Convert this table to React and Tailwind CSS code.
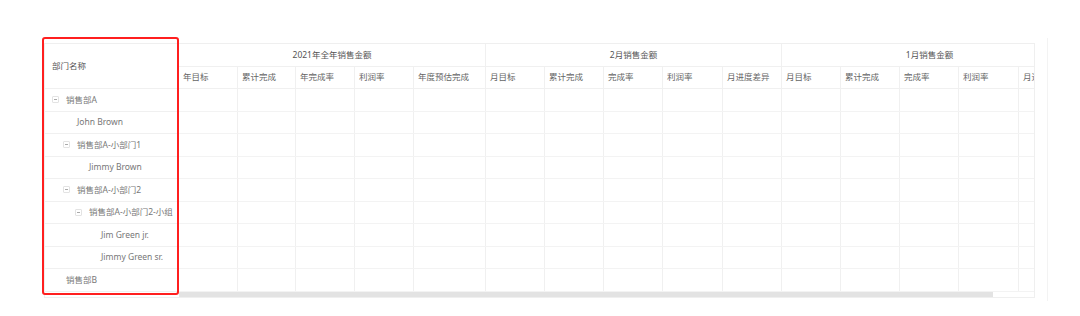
import React from 'react';

const groups = [
    {
        title: '2021年全年销售金额',
        width: 'w-[307px]',
        cols: [
            ['年目标', 'w-[59px]'],
            ['累计完成', 'w-[58px]'],
            ['年完成率', 'w-[59px]'],
            ['利润率', 'w-[59px]'],
            ['年度预估完成', 'w-[72px]'],
        ],
    },
    {
        title: '2月销售金额',
        width: 'w-[296px]',
        cols: [
            ['月目标', 'w-[59px]'],
            ['累计完成', 'w-[59px]'],
            ['完成率', 'w-[59px]'],
            ['利润率', 'w-[60px]'],
            ['月进度差异', 'w-[59px]'],
        ],
    },
    {
        title: '1月销售金额',
        width: 'w-[296px]',
        cols: [
            ['月目标', 'w-[59px]'],
            ['累计完成', 'w-[59px]'],
            ['完成率', 'w-[59px]'],
            ['利润率', 'w-[60px]'],
            ['月进度差异', 'w-[59px]'],
        ],
    },
];

// name, indent class, has children
const rows = [
    ['销售部A', 'pl-[7px]', true],
    ['John Brown', 'pl-[32px]', false],
    ['销售部A-小部门1', 'pl-[18px]', true],
    ['Jimmy Brown', 'pl-[44px]', false],
    ['销售部A-小部门2', 'pl-[18px]', true],
    ['销售部A-小部门2-小组', 'pl-[30px]', true],
    ['Jim Green jr.', 'pl-[56px]', false],
    ['Jimmy Green sr.', 'pl-[56px]', false],
    ['销售部B', 'pl-[21px]', false],
];

const allCols = groups.flatMap((g) => g.cols);

const Toggle = () => (
    <span className="w-[7px] h-[7px] mr-[7px] border border-[#e3e3e3] rounded-[1px] bg-white flex items-center justify-center shrink-0">
        <span className="w-[3px] h-px bg-[#aaa]" />
    </span>
);

const App = () => {
    return (
        <div className="w-[1080px] h-[316px] bg-white relative font-['Noto_Sans','Noto_Sans_CJK_SC',sans-serif] text-[8.5px] leading-none">
            <div className="pt-[38px] pl-[44px]">
                <div className="w-[1004px] h-[263px] border-r border-[#f3f3f3] pt-[5px]">
                    <div className="w-[991px] border border-[#efefef] flex">
                        {/* fixed column */}
                        <div className="w-[134px] shrink-0">
                            <div className="h-[45px] border-b border-[#f0f0f0] flex items-center pl-[7px] text-[#555]">
                                部门名称
                            </div>
                            {rows.map(([name, indent, kids]) => (
                                <div
                                    key={name}
                                    className={`h-[22.5px] border-b border-[#f0f0f0] flex items-center text-[#777] ${indent}`}
                                >
                                    {kids && <Toggle />}
                                    <span className="whitespace-nowrap">{name}</span>
                                </div>
                            ))}
                        </div>

                        {/* scrolling part */}
                        <div className="flex-1 overflow-hidden">
                            <div className="w-[899px]">
                                <div className="flex h-[23px] border-b border-[#f0f0f0]">
                                    {groups.map((g) => (
                                        <div
                                            key={g.title}
                                            className={`${g.width} shrink-0 border-r border-[#f0f0f0] flex items-center justify-center text-[#555]`}
                                        >
                                            {g.title}
                                        </div>
                                    ))}
                                </div>
                                <div className="flex h-[22px] border-b border-[#f0f0f0]">
                                    {allCols.map(([label, w], i) => (
                                        <div
                                            key={i}
                                            className={`${w} shrink-0 border-r border-[#f0f0f0] flex items-center pl-[4px] text-[#666] whitespace-nowrap`}
                                        >
                                            {label}
                                        </div>
                                    ))}
                                </div>
                                {rows.map(([name]) => (
                                    <div key={name} className="flex h-[22.5px] border-b border-[#f3f3f3]">
                                        {allCols.map(([, w], i) => (
                                            <div key={i} className={`${w} shrink-0 border-r border-[#f0f0f0]`} />
                                        ))}
                                    </div>
                                ))}
                            </div>
                            <div className="h-[5px]">
                                <div className="w-[814px] h-[5px] bg-[#e3e3e3]" />
                            </div>
                        </div>
                    </div>
                </div>
            </div>

            {/* annotation box */}
            <div className="absolute left-[42px] top-[37px] w-[137px] h-[258px] border-2 border-[#ff1f1f] rounded-[3px] pointer-events-none" />
        </div>
    );
};

export default App;
